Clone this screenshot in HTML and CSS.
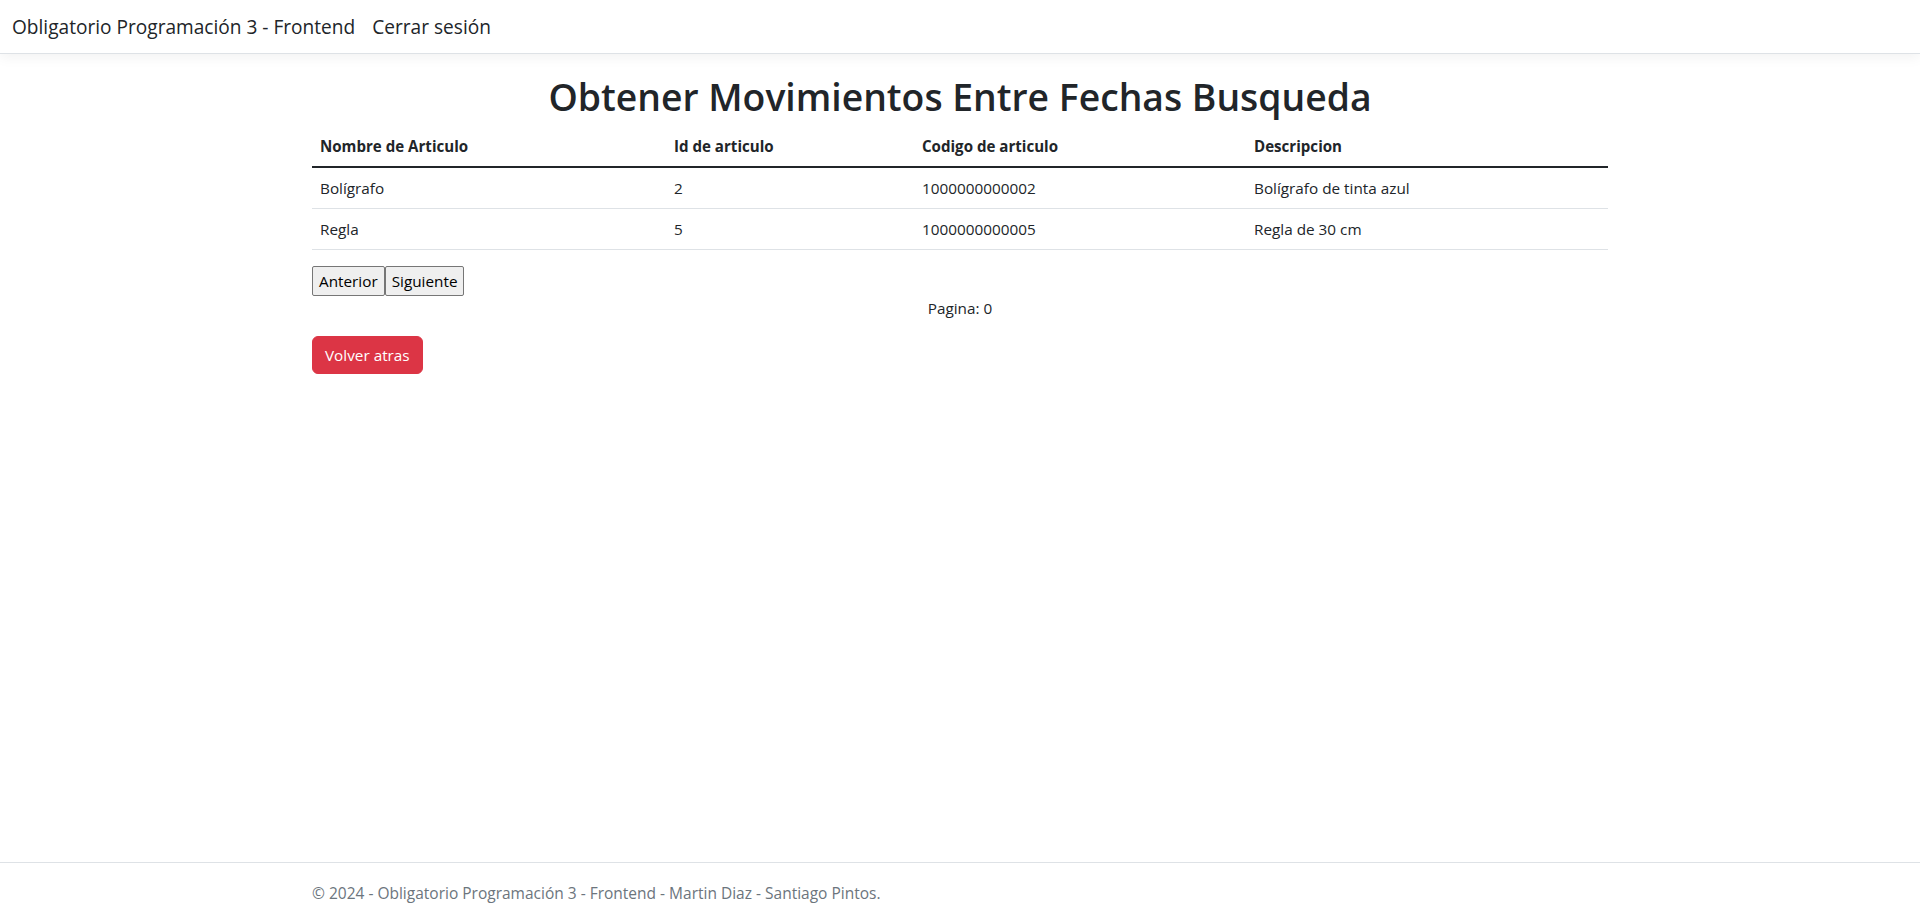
FILE: index.html
```html
<!DOCTYPE html>
<html lang="es">
<head>
<meta charset="utf-8">
<title>Obtener Movimientos Entre Fechas Busqueda</title>
<link rel="stylesheet" href="styles.css">
</head>
<body>
<header class="navbar">
  <a class="brand" href="#">Obligatorio Programación 3 - Frontend</a>
  <a class="nav-link" href="#">Cerrar sesión</a>
</header>
<main class="container">
  <h1 class="title">Obtener Movimientos Entre Fechas Busqueda</h1>
  <table class="table">
    <colgroup><col class="c1"><col class="c2"><col class="c3"><col class="c4"></colgroup>
    <thead>
      <tr><th>Nombre de Articulo</th><th>Id de articulo</th><th>Codigo de articulo</th><th>Descripcion</th></tr>
    </thead>
    <tbody>
      <tr><td>Bolígrafo</td><td>2</td><td>1000000000002</td><td>Bolígrafo de tinta azul</td></tr>
      <tr><td>Regla</td><td>5</td><td>1000000000005</td><td>Regla de 30 cm</td></tr>
    </tbody>
  </table>
  <div class="pager"><button class="pbtn">Anterior</button><button class="pbtn">Siguiente</button></div>
  <p class="page-num">Pagina: 0</p>
  <div><button class="btn-danger">Volver atras</button></div>
</main>
<footer class="footer">
  <div class="container">© 2024 - Obligatorio Programación 3 - Frontend - Martin Diaz - Santiago Pintos.</div>
</footer>
</body>
</html>
```
FILE: styles.css
```css
html, body { margin: 0; padding: 0; }
body {
  font-family: "Open Sans", "Noto Sans", sans-serif;
  font-size: 15.3px;
  line-height: 24px;
  color: #212529;
  background: #fff;
  min-height: 100vh;
  display: flex;
  flex-direction: column;
}
.navbar {
  height: 53px;
  display: flex;
  align-items: center;
  padding: 0 12px;
  border-bottom: 1px solid #dee2e6;
  box-shadow: 0 4px 12px rgba(0,0,0,.05);
  margin-bottom: 16px;
}
.brand, .nav-link {
  font-size: 19.1px;
  line-height: 30px;
  color: #212529;
  text-decoration: none;
}
.brand { margin-right: 17px; }
.container {
  width: 1320px;
  box-sizing: border-box;
  margin: 0 auto;
  padding: 0 12px;
}
.title {
  font-size: 37.3px;
  font-weight: 600;
  line-height: 48px;
  text-align: center;
  margin: 0 0 5px;
  padding-top: 3px;
}
.table {
  width: 100%;
  border-collapse: collapse;
  margin-bottom: 16px;
}
.c1 { width: 354px; } .c2 { width: 248px; } .c3 { width: 332px; } .c4 { width: 362px; }
.table th, .table td {
  padding: 8px;
  text-align: left;
  border-bottom: 1px solid #dee2e6;
}
.table th { font-weight: 700; font-size: 15.1px; border-bottom: 2px solid #212529; }
.pager { display: flex; }
.pbtn {
  font: inherit;
  margin: 0;
  padding: 1px 6px;
  color: #000;
  background: #efefef;
  border: 1px solid #767676;
  border-radius: 2px;
  height: 30px;
}
.page-num { text-align: center; margin: 0 0 16px; }
.btn-danger {
  font: inherit;
  color: #fff;
  background: #dc3545;
  border: 1px solid #dc3545;
  border-radius: 6px;
  padding: 6px 12px;
}
.footer {
  margin-top: auto;
  border-top: 1px solid #dee2e6;
  line-height: 60px;
  font-size: 15.5px;
  color: #6c757d;
  white-space: nowrap;
}
```
